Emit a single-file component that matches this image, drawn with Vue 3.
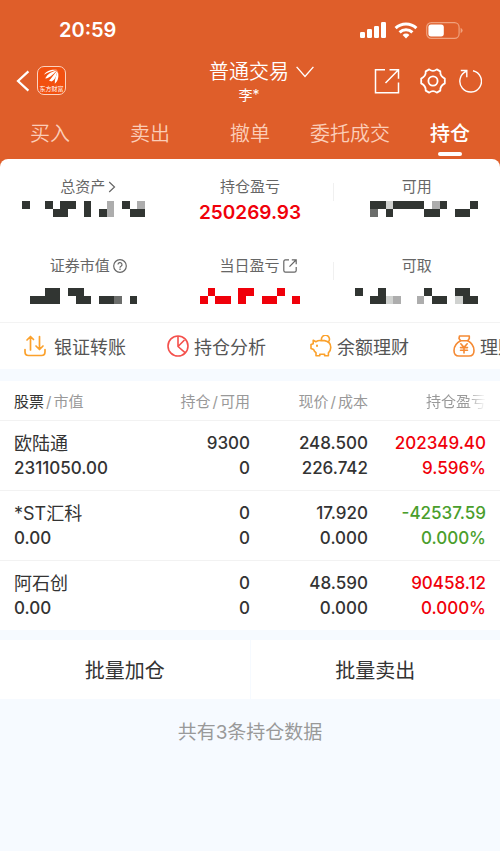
<template>
  <div class="page">
    <header class="top">
      <div class="status">
        <span class="status-time">20:59</span>
        <div class="status-icons">
          <svg width="26" height="17" viewBox="0 0 26 17" fill="#fff" aria-hidden="true">
            <rect x="0" y="10" width="5" height="6" rx="1.2" />
            <rect x="7" y="7" width="5" height="9" rx="1.2" />
            <rect x="14" y="4" width="5" height="12" rx="1.2" />
            <rect x="21" y="0" width="5" height="16" rx="1.2" />
          </svg>
          <svg width="24" height="17" viewBox="0 0 24 17" aria-hidden="true">
            <g fill="none" stroke="#fff" stroke-width="3">
              <path d="M1.6 6.2a15 15 0 0 1 20.8 0" />
              <path d="M5.6 10.4a9.2 9.2 0 0 1 12.8 0" />
            </g>
            <path d="M12 16.4l-3.4-3.5a4.9 4.9 0 0 1 6.8 0z" fill="#fff" />
          </svg>
          <svg width="37" height="17" viewBox="0 0 37 17" aria-hidden="true">
            <rect x="0.7" y="0.7" width="32.4" height="15.6" rx="4.6" fill="none" stroke="#f0a17d" stroke-width="1.2" />
            <rect x="2.4" y="2.6" width="15.4" height="11.8" rx="2.6" fill="#fff" />
            <path d="M34.6 5.8q2 .9 2 2.7t-2 2.7z" fill="#f0a17d" />
          </svg>
        </div>
      </div>

      <div class="bar">
        <div class="bar-left">
          <button class="icon-btn" type="button" aria-label="返回">
            <svg width="14" height="22" viewBox="0 0 14 22" fill="none" stroke="#fff" stroke-width="2.2">
              <path d="M12.4 1.4L2 11l10.4 9.6" />
            </svg>
          </button>
          <span class="logo">
            <svg width="17" height="16" viewBox="0 0 17 16" fill="#fff" aria-hidden="true">
              <path d="M1 5.8C3.6 1.4 8 .2 14 .8 9.5 2 5 3 1 5.8z" />
              <path d="M2.2 9.2C4.8 4.8 8.6 2.4 14.2 1.2 10.6 4.4 8.2 8 3 9.6z" />
              <path d="M6 11.6C8.4 9.6 10.6 5.4 14.4 1.6 13.6 6.6 12.4 10.6 8.4 12.6z" />
              <path d="M11.8 14.8C11.4 10.4 13.6 6 14.8 2.2 16 6.8 15.6 11.6 11.8 14.8z" />
            </svg>
            <span class="logo-text">东方财富</span>
          </span>
        </div>
        <div class="bar-title">
          <button class="title-btn" type="button">
            普通交易
            <svg width="18" height="12" viewBox="0 0 18 12" fill="none" stroke="#fff" stroke-width="1.4" aria-hidden="true">
              <path d="M.6.9L9 10.4 17.4.9" />
            </svg>
          </button>
          <span class="user">李*</span>
        </div>
        <div class="bar-right">
          <button class="icon-btn" type="button" aria-label="分享">
            <svg width="26" height="26" viewBox="0 0 26 26" fill="none" stroke="#fff" stroke-width="1.5">
              <path d="M11 1.7H1.5v23h23V14.5M15.5 1.7h9v9M24.5 1.7L11.5 15" />
            </svg>
          </button>
          <button class="icon-btn icon-btn--gear" type="button" aria-label="设置">
            <svg width="26" height="26" viewBox="0 0 26 26" fill="none" stroke="#fff" stroke-width="1.8" stroke-linejoin="round">
              <path d="M9.2 1.4Q13 4.2 16.8 1.4L20.3 3.4Q19.9 8.1 24.8 10.6V15.4Q19.9 17.9 20.3 22.6L16.8 24.6Q13 21.8 9.2 24.6L5.7 22.6Q6.1 17.9 1.2 15.4V10.6Q6.1 8.1 5.7 3.4z" />
              <circle cx="13" cy="13" r="4.6" />
            </svg>
          </button>
          <button class="icon-btn" type="button" aria-label="刷新">
            <svg width="24" height="24" viewBox="0 0 24 24" fill="none" stroke="#fff" stroke-width="1.4">
              <path d="M15 1.7A10.8 10.8 0 1 1 8.7 2.2M2.8 1.5H8.8V8.2" />
            </svg>
          </button>
        </div>
      </div>

      <nav class="tabs">
        <a
          v-for="t in tabs" :key="t" href="#"
          class="tab" :class="{ 'tab--on': t === activeTab }"
          @click.prevent="activeTab = t"
        >{{ t }}</a>
      </nav>
    </header>

    <section class="panel">
      <div v-for="(row, r) in stats" :key="r" class="stats" :class="{ 'stats--second': r === 1 }">
        <div v-for="s in row" :key="s.label" class="stat">
          <div class="stat-label" :class="s.shift">
            <span>{{ s.label }}</span>
            <svg v-if="s.icon === 'arrow'" width="8" height="12" viewBox="0 0 8 12" class="line">
              <path d="M1.2 1l5.3 5-5.3 5" />
            </svg>
            <svg v-else-if="s.icon === 'help'" width="14" height="14" viewBox="0 0 14 14" class="line">
              <circle cx="7" cy="7" r="6.3" />
              <path d="M5 5.6a2 2 0 1 1 3 1.7q-1 .5-1 1.4M7 9.6v1.3" />
            </svg>
            <svg v-else-if="s.icon === 'open'" width="14" height="14" viewBox="0 0 14 14" class="line">
              <path d="M6 .9H2.4Q.8.9.8 2.5v9Q.8 13.2 2.4 13.2h9Q13.2 13.2 13.2 11.5V8M8.8.9h4.4v4.4M13 1L6.5 7.6" />
            </svg>
          </div>
          <div class="stat-value">
            <template v-if="s.value">{{ s.value }}</template>
            <!-- 金额打码：两行色块 -->
            <svg
              v-else :width="Math.round(s.mask[0].length * 7.7)" height="16"
              :viewBox="`0 0 ${s.mask[0].length} 2`" preserveAspectRatio="none"
              shape-rendering="crispEdges" aria-hidden="true"
            >
              <rect
                v-for="c in cells(s.mask)" :key="`${c.x}-${c.y}`"
                :x="c.x" :y="c.y" width="1" height="1" :fill="c.fill"
              />
            </svg>
          </div>
        </div>
      </div>

      <nav class="quick">
        <a href="#" class="quick-item">
          <svg width="22" height="22" viewBox="0 0 22 22" fill="none" stroke="#fba12c" stroke-width="1.7" stroke-linecap="round" stroke-linejoin="round">
            <path d="M1 14.5v2.2Q1 20.5 4.5 20.5h13Q21 20.5 21 16.7v-2.2M6.5 15V1.5M3 5l3.5-3.5L9.5 4.5M15.5 1.5V14M12 11l3.5 3.5L19 11" />
          </svg>
          银证转账
        </a>
        <a href="#" class="quick-item">
          <svg width="22" height="22" viewBox="0 0 22 22" fill="none" stroke="#f4504c" stroke-width="1.6" stroke-linejoin="round">
            <circle cx="11" cy="11" r="10" />
            <path d="M11 1v10.5l7.3 6.3M11 11.5L17.5 5" />
          </svg>
          持仓分析
        </a>
        <a href="#" class="quick-item">
          <svg width="22" height="22" viewBox="0 0 22 22" fill="none" stroke="#fba12c" stroke-width="1.6" stroke-linejoin="round" stroke-linecap="round">
            <path d="M3.2 5.2L5.8 6.7Q8.4 5.2 11 5.6h3.5Q20.8 6.6 20.8 12.4 20.6 16 18.4 17.9V20.8H14.6V19.3H9.8V20.8H6V17.6Q4.2 16.4 3.6 14.4L1 13.4V9.6L3.2 8.8z" />
            <path d="M11.6 5.3A4 4 0 1 1 18.5 6.8" />
            <path d="M7 10.5v.6" stroke-width="2" />
          </svg>
          余额理财
        </a>
        <a href="#" class="quick-item">
          <svg width="22" height="22" viewBox="0 0 22 22" fill="none" stroke="#f58a34" stroke-width="1.6" stroke-linejoin="round" stroke-linecap="round">
            <path d="M6.5 1h9.8v2.5L14.8 5.8H7.6L6 3.5z" />
            <path d="M7.6 5.8Q1 9.3 1 15.5 1 21 6 21h10q5 0 5-5.5 0-6.2-6.2-9.7" />
            <path d="M7.8 8.8l3.2 3.6 3.2-3.6M7.5 12.6h7M7.5 15.3h7M11 12.5V18" />
          </svg>
          理财
        </a>
      </nav>
    </section>

    <table class="holds">
      <thead>
        <tr>
          <th><b>股票</b><i>/</i>市值</th>
          <th>持仓<i>/</i>可用</th>
          <th>现价<i>/</i>成本</th>
          <th><span class="fade">持仓盈亏</span></th>
        </tr>
      </thead>
      <tbody>
        <tr v-for="h in holds" :key="h.name">
          <td><span class="name">{{ h.name }}</span><span>{{ h.worth }}</span></td>
          <td><span>{{ h.qty }}</span><span>{{ h.usable }}</span></td>
          <td><span>{{ h.price }}</span><span>{{ h.cost }}</span></td>
          <td :class="h.gain.startsWith('-') ? 'down' : 'up'"><span>{{ h.gain }}</span><span>{{ h.rate }}</span></td>
        </tr>
      </tbody>
    </table>

    <div class="batch">
      <button type="button">批量加仓</button>
      <button type="button">批量卖出</button>
    </div>
    <p class="total">共有{{ holds.length }}条持仓数据</p>
  </div>
</template>

<script setup>
import { ref } from 'vue'

const tabs = ['买入', '卖出', '撤单', '委托成交', '持仓']
const activeTab = ref('持仓')

// 色块字符：x 深色 m 中灰 g 灰 l 浅灰 r 红 . 空
const shades = { x: '#313532', m: '#6b6d6b', g: '#adadad', l: '#d0d2d0', r: '#f0000a' }

const stats = [
  [
    { label: '总资产', icon: 'arrow', shift: 'shift-s', mask: ['x..x.xx.x..g.x.g', '....xx..x.xg..xx'] },
    { label: '持仓盈亏', value: '250269.93' },
    { label: '可用', mask: ['..xxlxxxx.gx...x', '..m.x....xx..xx.'] },
  ],
  [
    { label: '证券市值', icon: 'help', shift: 'shift-s', mask: ['...xx.xx........', '.xxxx..xx.xxm.x.'] },
    { label: '当日盈亏', icon: 'open', shift: 'shift-l', mask: ['.r...rr...r..', 'r.rr.r..rr..r'] },
    { label: '可取', mask: ['x..x.....x...xx.', '..xxlg..g.xx.lxx'] },
  ],
]

const cells = (mask) =>
  mask.flatMap((line, y) =>
    [...line].map((ch, x) => ({ x, y, fill: shades[ch] })).filter((c) => c.fill)
  )

const holds = [
  { name: '欧陆通', worth: '2311050.00', qty: '9300', usable: '0', price: '248.500', cost: '226.742', gain: '202349.40', rate: '9.596%' },
  { name: '*ST汇科', worth: '0.00', qty: '0', usable: '0', price: '17.920', cost: '0.000', gain: '-42537.59', rate: '0.000%' },
  { name: '阿石创', worth: '0.00', qty: '0', usable: '0', price: '48.590', cost: '0.000', gain: '90458.12', rate: '0.000%' },
]
</script>

<style>
body { background: #f6faff; }
</style>

<style scoped>
.page {
  min-height: 100vh; overflow: hidden;
  background: #f6faff; color: #333;
  font-family: Inter, "Noto Sans CJK SC", sans-serif;
}
button { padding: 0; border: 0; background: none; color: inherit; font: inherit; cursor: pointer; }
a { color: inherit; text-decoration: none; }
svg { display: block; flex: none; }

/* 顶部 */
.top { background: #df5e2a; color: #fff; padding-bottom: 10px; }
.status {
  display: flex; align-items: center; justify-content: space-between;
  height: 60px; padding: 0 37px 0 59px;
}
.status-time { font-size: 20px; font-weight: 600; }
.status-icons { display: flex; align-items: center; gap: 8px; }
.bar {
  display: grid; grid-template-columns: 1fr auto 1fr; align-items: center;
  height: 44px; padding: 0 18px 0 16px;
}
.bar-left { display: flex; align-items: center; gap: 7px; margin-top: -5px; }
.bar-right { display: flex; align-items: center; justify-content: flex-end; margin-top: -5px; }
.icon-btn--gear { margin: 0 12px 0 20px; }
.logo {
  display: flex; flex-direction: column; align-items: center;
  box-sizing: border-box; width: 29px; height: 29px; padding-top: 2px;
  border: 1px solid #fbd3c0; border-radius: 7px; background: #f2500f;
}
.logo-text { font-size: 6px; line-height: 7px; white-space: nowrap; }
.bar-title { display: flex; flex-direction: column; align-items: center; }
.title-btn {
  display: flex; align-items: center; gap: 7px; padding-left: 25px;
  font-size: 20px; line-height: 24px; font-weight: 350;
}
.user { font-size: 14px; line-height: 22px; }
.tabs { display: grid; grid-template-columns: repeat(5, 1fr); }
.tab {
  position: relative; height: 49px; padding-top: 6px; line-height: 49px;
  text-align: center; font-size: 20px; font-weight: 350; color: #fbcdb8;
}
.tab--on { color: #fff; font-weight: 500; }
.tab--on::after {
  content: ''; position: absolute; left: 50%; bottom: 3px;
  width: 24px; height: 4px; margin-left: -12px; border-radius: 2px; background: #fff;
}

/* 资产面板 */
.panel { position: relative; margin-top: -10px; border-radius: 8px 8px 0 0; background: #fff; overflow: hidden; }
.stats { display: grid; grid-template-columns: repeat(3, 1fr); padding-top: 17px; }
.stats--second { padding: 30px 0 10px; }
.stat { display: flex; flex-direction: column; align-items: center; gap: 3px; }
.stats--second .stat { gap: 11px; }
.stat:last-child {
  background: linear-gradient(#f0f0f0, #f0f0f0) 0 7px / 1px 18px no-repeat;
}
.stat-label {
  display: flex; align-items: center; gap: 3px;
  height: 22px; font-size: 15px; line-height: 22px; color: #666;
}
.shift-s { padding-left: 10px; }
.shift-l { padding-left: 16px; }
.line { fill: none; stroke: #666; stroke-width: 1.2; }
.stat-value {
  height: 24px; line-height: 24px;
  font-size: 19px; font-weight: 600; color: #f0000a;
}
.quick { display: flex; overflow: hidden; border-top: 1px solid #f3f3f3; padding-left: 24px; }
.quick-item {
  display: flex; flex: none; align-items: center; gap: 5px;
  width: 143px; height: 46px; font-size: 18px; white-space: nowrap; color: #555;
}
.quick-item:first-child { gap: 8px; }

/* 持仓列表 */
.holds { width: 100%; margin-top: 12px; border-collapse: collapse; table-layout: fixed; background: #fff; }
.holds th, .holds td { box-sizing: border-box; padding: 0; text-align: right; }
.holds th:first-child, .holds td:first-child { padding-left: 14px; text-align: left; }
.holds th:nth-child(3) { width: 118px; }
.holds th:last-child { width: 132px; }
.holds th:last-child, .holds td:last-child { padding-right: 14px; }
.holds th { height: 39px; font-size: 15px; font-weight: 400; color: #999; border-bottom: 1px solid #f2f2f2; }
.holds th b { font-weight: 400; color: #333; }
.holds th i { padding: 0 2px; font-style: normal; }
.fade { -webkit-mask-image: linear-gradient(90deg, #000 68%, transparent); mask-image: linear-gradient(90deg, #000 68%, transparent); }
.holds td { padding-top: 10px; padding-bottom: 9px; font-size: 17px; font-weight: 500; border-bottom: 1px solid #f2f2f2; }
.holds tr:last-child td { border-bottom: 0; }
.holds td span { display: block; height: 25px; line-height: 25px; }
.holds td .name { font-size: 18px; font-weight: 400; }
.up { color: #f0000a; }
.down { color: #4a9e2c; }

.batch { display: grid; grid-template-columns: 1fr 1fr; gap: 1px; margin-top: 10px; }
.batch button { height: 59px; background: #fff; font-size: 20px; }
.total { margin: 21px 0; text-align: center; font-size: 19px; line-height: 26px; color: #999; }
</style>
